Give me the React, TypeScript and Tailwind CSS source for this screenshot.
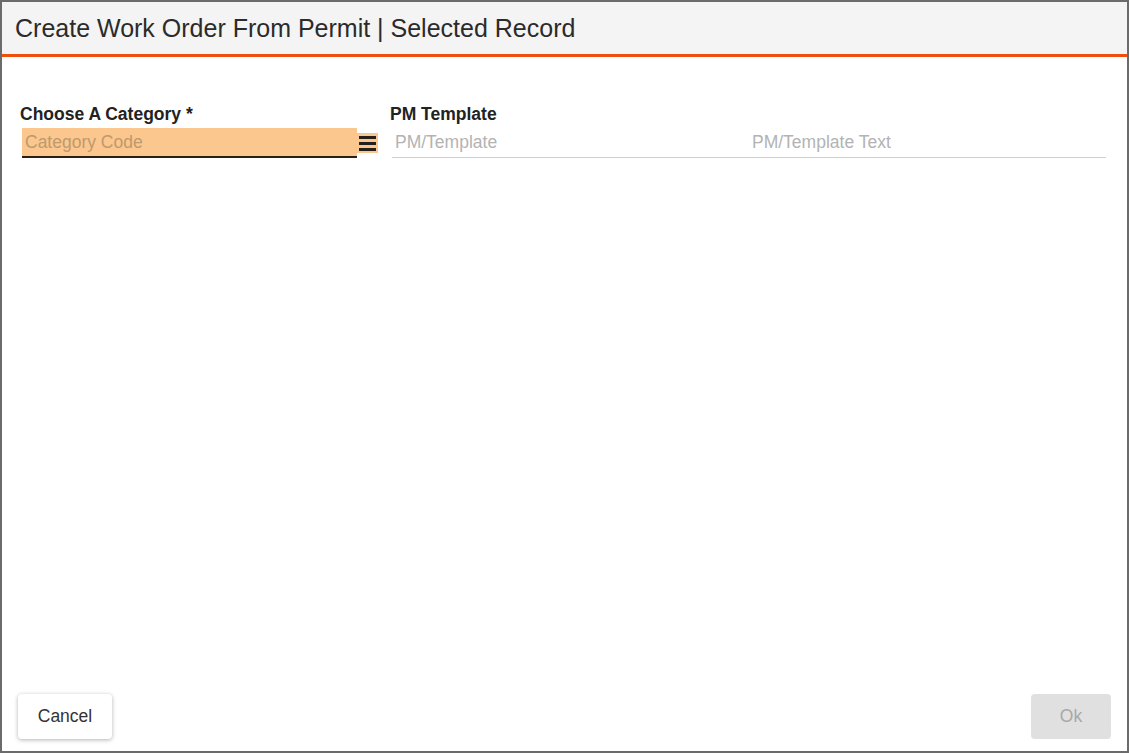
import React from 'react';

const font = { fontFamily: '"Liberation Sans", Arial, sans-serif' };

const MenuIcon: React.FC = () => (
  <div className="flex shrink-0 flex-col justify-center gap-[3px] w-[21px] h-[20px] bg-[#fbc78e] px-[2px]">
    <span className="block h-[3px] bg-[#231f1a]" />
    <span className="block h-[3px] bg-[#231f1a]" />
    <span className="block h-[3px] bg-[#231f1a]" />
  </div>
);

export const App: React.FC = () => {
  return (
    <div className="w-full h-[753px] bg-[#6b6b6b] p-[2px]" style={font}>
      <div className="flex flex-col h-full bg-white">
        {/* Cabeçalho */}
        <header className="h-[55px] bg-[#f4f4f4] border-b-[3px] border-[#f04e0c] flex items-center px-[13px] pt-[2px]">
          <h1 className="text-[25px] text-[#2b2b2b]">Create Work Order From Permit | Selected Record</h1>
        </header>

        <div className="flex-1 flex flex-col">
          <div className="flex pt-[47px] px-[18px] gap-[12px]">
            <div className="w-[358px] shrink-0 flex flex-col">
              <label className="text-[17.5px] font-bold text-[#222] leading-[20px]">Choose A Category *</label>
              <div className="flex items-center mt-[4px]">
                <div className="w-[335px] shrink-0 h-[30px] ml-[2px] bg-[#fbc78e] border-b-[2px] border-[#2a1f14] flex items-center px-[3px]">
                  <span className="text-[17.5px] text-[#c0996c]">Category Code</span>
                </div>
                <MenuIcon />
              </div>
            </div>

            <div className="flex-1 flex flex-col pr-[3px]">
              <label className="text-[17.5px] font-bold text-[#222] leading-[20px]">PM Template</label>
              <div className="flex items-center h-[30px] mt-[4px] ml-[2px] border-b border-[#cfcfcf] px-[3px]">
                <span className="w-[357px] text-[17.5px] text-[#b3b3b3]">PM/Template</span>
                <span className="text-[17.5px] text-[#b3b3b3]">PM/Template Text</span>
              </div>
            </div>
          </div>
        </div>

        {/* Rodapé */}
        <footer className="flex justify-between items-center px-[16px] pb-[12px]">
          <button className="w-[94px] h-[45px] rounded-[4px] bg-white text-[17.5px] text-[#333] shadow-[0_1px_4px_rgba(0,0,0,0.3)]">
            Cancel
          </button>
          <button disabled className="w-[80px] h-[45px] rounded-[4px] bg-[#e0e0e0] text-[17.5px] text-[#a8a8a8]">
            Ok
          </button>
        </footer>
      </div>
    </div>
  );
};

export default App;
